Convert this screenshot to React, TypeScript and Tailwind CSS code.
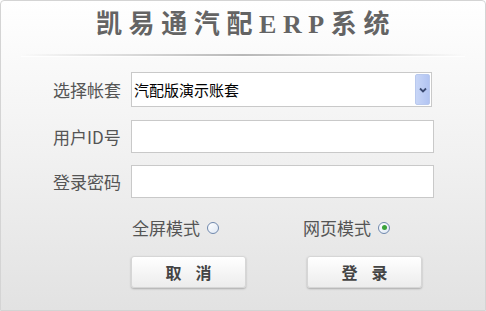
import React from "react";

const sans = { fontFamily: '"Noto Sans CJK SC", "Liberation Sans", sans-serif' };

function Radio({ checked }: { checked?: boolean }) {
  return (
    <span className="relative inline-flex h-[12px] w-[12px] items-center justify-center rounded-full border border-[#6f88ad] bg-gradient-to-br from-white to-[#dfe8f4]">
      {checked && <span className="h-[5px] w-[5px] rounded-full bg-[#3aa33a]" />}
    </span>
  );
}

function Row({ label, children, mt }: { label: string; children: React.ReactNode; mt: string }) {
  return (
    <div className={`flex items-center ${mt}`}>
      <div className="w-[78px] pl-[52px] box-content text-[17px] leading-none text-[#555] whitespace-nowrap" style={sans}>
        {label}
      </div>
      {children}
    </div>
  );
}

export default function App() {
  return (
    <div className="relative h-[311px] w-[486px] overflow-hidden rounded-t-[4px] border border-[#d4d4d4] bg-gradient-to-b from-white via-[#f1f1f1] to-[#e2e2e2]">
      <div
        className="pt-[9px] text-center text-[26px] font-bold leading-[30px] tracking-[6.6px] text-[#646464] pl-[6px]"
        style={{ fontFamily: '"Liberation Serif", "Noto Sans CJK SC", serif', textShadow: "0 1px 1px #fff" }}
      >
        凯易通汽配ERP系统
      </div>
      <div className="mx-[20px] mt-[14px] h-[2px] bg-gradient-to-r from-transparent via-[#b8b8b8] to-transparent shadow-[0_1px_1px_rgba(255,255,255,0.9)]" />

      <div className="mt-[16px]">
        <Row label="选择帐套" mt="">
          <div className="flex h-[35px] w-[301px] items-center border border-[#c9c9c9] bg-white pl-[2px] pr-[1px]">
            <span className="flex-1 text-[15px] leading-none text-black" style={sans}>
              汽配版演示账套
            </span>
            <span className="flex h-[31px] w-[15px] items-center justify-center rounded-[2px] border border-[#b9c9ee] bg-gradient-to-r from-[#c8d6f7] to-[#b2c4f2]">
              <svg width="8" height="6" viewBox="0 0 8 6">
                <path d="M1 1.5 L4 4.5 L7 1.5" fill="none" stroke="#3b4a72" strokeWidth="1.8" />
              </svg>
            </span>
          </div>
        </Row>
        <Row label="用户ID号" mt="mt-[13px]">
          <div className="h-[33px] w-[303px] border border-[#c9c9c9] bg-white" />
        </Row>
        <Row label="登录密码" mt="mt-[12px]">
          <div className="h-[33px] w-[303px] border border-[#c9c9c9] bg-white" />
        </Row>

        <div className="mt-[21px] flex items-center text-[17px] leading-none text-[#555]" style={sans}>
          <div className="ml-[131px] flex w-[171px] items-center gap-[7px]">
            <span>全屏模式</span>
            <Radio />
          </div>
          <div className="flex items-center gap-[7px]">
            <span>网页模式</span>
            <Radio checked />
          </div>
        </div>

        <div className="mt-[20px] flex">
          <button
            className="ml-[130px] h-[32px] w-[115px] rounded-[3px] border border-[#d6d6d6] bg-gradient-to-b from-white to-[#ececec] text-[16px] font-bold tracking-[14px] pl-[14px] text-[#444] shadow-[0_1px_2px_rgba(0,0,0,0.25)]"
            style={sans}
          >
            取消
          </button>
          <button
            className="ml-[61px] h-[32px] w-[115px] rounded-[3px] border border-[#d6d6d6] bg-gradient-to-b from-white to-[#ececec] text-[16px] font-bold tracking-[14px] pl-[14px] text-[#444] shadow-[0_1px_2px_rgba(0,0,0,0.25)]"
            style={sans}
          >
            登录
          </button>
        </div>
      </div>
    </div>
  );
}
